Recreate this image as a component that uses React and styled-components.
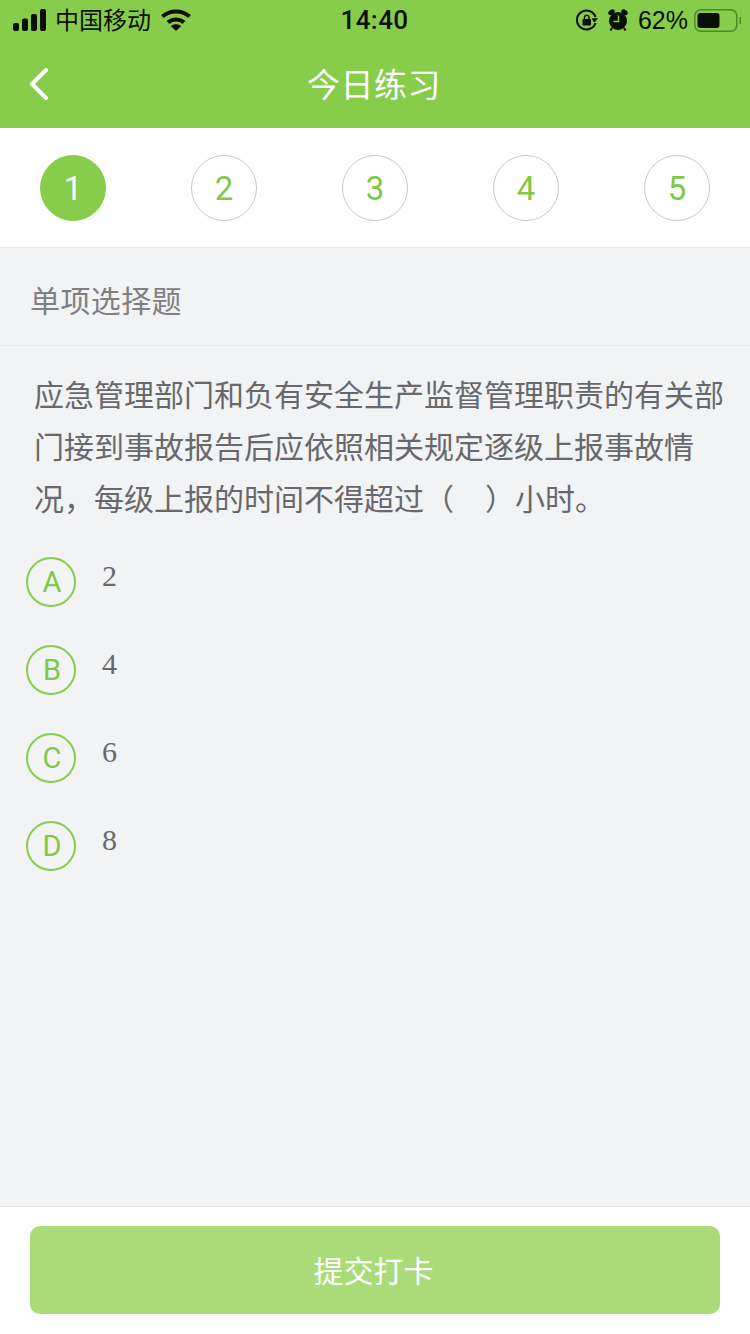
import React from 'react';
import styled, { createGlobalStyle } from 'styled-components';

const GlobalStyle = createGlobalStyle`
  html, body {
    margin: 0;
    padding: 0;
    background: #f2f3f5;
  }
  * {
    box-sizing: border-box;
  }
`;

const Page = styled.div`
  width: 750px;
  height: 1334px;
  display: flex;
  flex-direction: column;
  overflow: hidden;
  background: #f2f3f5;
  font-family: "Liberation Sans", "Noto Sans CJK SC", sans-serif;
`;

const Header = styled.header`
  height: 128px;
  flex: none;
  background: #87cd4b;
`;

const StatusBar = styled.div`
  height: 40px;
  padding: 0 8px 0 13px;
  display: grid;
  grid-template-columns: 1fr auto 1fr;
  align-items: center;
  color: #0a0f05;
`;

const StatusLeft = styled.div`
  display: flex;
  align-items: center;
  font-size: 24px;
`;

const Carrier = styled.span`
  margin: -3px 10px 0 9px;
`;

const StatusRight = styled.div`
  display: flex;
  align-items: center;
  justify-content: flex-end;
  font-size: 25px;
`;

const Clock = styled.div`
  font-family: Roboto, sans-serif;
  font-size: 26px;
  font-weight: 500;
  letter-spacing: 0.4px;
  margin-right: 6px;
`;

const StatusIcon = styled.svg`
  flex: none;
  margin-right: ${p => p.$gap || 0}px;
`;

const NavBar = styled.div`
  height: 88px;
  padding: 0 2px 2px 0;
  position: relative;
  display: flex;
  align-items: center;
  justify-content: center;
`;

const BackIcon = styled.svg`
  position: absolute;
  left: 28px;
  top: 27px;
`;

const Title = styled.h1`
  margin: 0;
  font-size: 33px;
  font-weight: 400;
  color: #fff;
  letter-spacing: 0.5px;
`;

const Steps = styled.div`
  height: 120px;
  flex: none;
  padding: 27px 40px 0;
  display: flex;
  justify-content: space-between;
  align-items: flex-start;
  background: #fff;
  border-bottom: 1px solid #e6e6e6;
`;

const Step = styled.div`
  width: 66px;
  height: 66px;
  border-radius: 50%;
  display: flex;
  align-items: center;
  justify-content: center;
  font-family: Roboto, sans-serif;
  font-size: 33px;
  color: ${p => (p.$active ? '#fff' : '#7fc84a')};
  background: ${p => (p.$active ? '#87cd4b' : '#fff')};
  border: 1px solid ${p => (p.$active ? '#87cd4b' : '#c8c8c8')};
`;

const SectionLabel = styled.div`
  height: 98px;
  flex: none;
  padding: 4px 30px 0;
  display: flex;
  align-items: center;
  font-size: 30px;
  letter-spacing: 0.4px;
  color: #808083;
  border-bottom: 1px solid #e6e7e9;
`;

const Question = styled.p`
  margin: 0;
  padding: 24px 20px 0 34px;
  font-size: 30px;
  line-height: 52px;
  color: #68686c;
`;

const Options = styled.div`
  padding: 31px 0 0 26px;
  display: flex;
  flex-direction: column;
  gap: 38px;
`;

const Option = styled.div`
  display: flex;
  align-items: flex-start;
  gap: 26px;
`;

const OptionBadge = styled.div`
  width: 50px;
  height: 50px;
  flex: none;
  padding-left: 2px;
  border-radius: 50%;
  border: 2px solid #87cd4b;
  display: flex;
  align-items: center;
  justify-content: center;
  font-family: Roboto, sans-serif;
  font-size: 29px;
  color: #7fc84a;
`;

const OptionText = styled.div`
  font-family: "Liberation Serif", serif;
  font-size: 30px;
  line-height: 38px;
  color: #68686c;
`;

const Footer = styled.footer`
  margin-top: auto;
  height: 128px;
  flex: none;
  padding: 19px 30px 0;
  background: #fff;
  border-top: 1px solid #e6e6e6;
`;

const SubmitButton = styled.button`
  display: block;
  width: 690px;
  height: 88px;
  padding: 0 3px 3px 0;
  border: 0;
  border-radius: 10px;
  background: #a9dc78;
  color: #fff;
  font-family: inherit;
  font-size: 30px;
`;

const SignalIcon = () => (
  <StatusIcon width="33" height="22" viewBox="0 0 33 22" fill="#0a0f05">
    <rect x="0" y="14" width="6" height="8" rx="2" />
    <rect x="9" y="9.500" width="6" height="12.500" rx="2" />
    <rect x="18" y="5" width="6" height="17" rx="2" />
    <rect x="27" y="0" width="6" height="22" rx="2" />
  </StatusIcon>
);

const WifiIcon = () => (
  <StatusIcon width="30" height="22" viewBox="0 0 30 22" fill="none" stroke="#0a0f05" strokeWidth="4.200">
    <path d="M1.500 7.500 C9 0.800 21 0.800 28.500 7.500" />
    <path d="M7 13.500 C11.500 9.500 18.500 9.500 23 13.500" />
    <path d="M9.800 17 L15 22 L20.200 17 C17 14.500 13 14.500 9.800 17 Z" fill="#0a0f05" stroke="none" />
  </StatusIcon>
);

const RotationLockIcon = () => (
  <StatusIcon $gap={10} width="22" height="22" viewBox="0 0 22 22" fill="none" stroke="#0a0f05" strokeWidth="2">
    <path d="M19.500 14 A9.500 9.500 0 1 1 19.500 8" />
    <path d="M22 9 L18.500 13.500 L15.500 9.500 Z" fill="#0a0f05" stroke="none" />
    <rect x="6.500" y="10" width="8.500" height="6.500" rx="1" fill="#0a0f05" stroke="none" />
    <path d="M8.500 10 V8 A2.300 2.300 0 0 1 13 8 V10" strokeWidth="1.500" />
  </StatusIcon>
);

const AlarmIcon = () => (
  <StatusIcon $gap={10} width="20" height="22" viewBox="0 0 20 22" fill="#0a0f05">
    <circle cx="10" cy="12" r="9" />
    <ellipse cx="3.500" cy="3.200" rx="3.500" ry="2.400" transform="rotate(-35 3.500 3.200)" />
    <ellipse cx="16.500" cy="3.200" rx="3.500" ry="2.400" transform="rotate(35 16.500 3.200)" />
    <path d="M10.500 6.500 V12.500 H5.500" stroke="#87cd4b" strokeWidth="1.400" fill="none" />
    <path d="M4 19 L2.500 21.500 M16 19 L17.500 21.500" stroke="#0a0f05" strokeWidth="2" />
  </StatusIcon>
);

const BatteryIcon = () => (
  <svg width="48" height="23" viewBox="0 0 48 23" style={{ marginLeft: 6, flex: 'none' }}>
    <rect x="0.800" y="0.800" width="42" height="21.400" rx="6" fill="none" stroke="#4d8a26" strokeWidth="1.500" />
    <rect x="3.500" y="4" width="22" height="15" rx="3" fill="#0a0f05" />
    <rect x="45.500" y="8" width="1.500" height="7" fill="#4d8a26" />
  </svg>
);

const BackArrow = () => (
  <BackIcon width="22" height="34" viewBox="0 0 22 34" fill="none" stroke="#fff" strokeWidth="4" strokeLinecap="round" strokeLinejoin="round">
    <path d="M18 3 L4 17 L18 31" />
  </BackIcon>
);

const steps = [1, 2, 3, 4, 5];
const options = [
  ['A', '2'],
  ['B', '4'],
  ['C', '6'],
  ['D', '8'],
];
const questionText = '应急管理部门和负有安全生产监督管理职责的有关部门接到事故报告后应依照相关规定逐级上报事故情况，每级上报的时间不得超过（\u00A0\u00A0\u00A0\u2009）小时。';

const App = () => {
  return (
    <Page>
      <GlobalStyle />
      <Header>
        <StatusBar>
          <StatusLeft>
            <SignalIcon />
            <Carrier>中国移动</Carrier>
            <WifiIcon />
          </StatusLeft>
          <Clock>14:40</Clock>
          <StatusRight>
            <RotationLockIcon />
            <AlarmIcon />
            <span>62%</span>
            <BatteryIcon />
          </StatusRight>
        </StatusBar>
        <NavBar>
          <BackArrow />
          <Title>今日练习</Title>
        </NavBar>
      </Header>
      <Steps>
        {steps.map(n => (
          <Step key={n} $active={n === 1}>{n}</Step>
        ))}
      </Steps>
      <SectionLabel>单项选择题</SectionLabel>
      <Question>{questionText}</Question>
      <Options>
        {options.map(([key, text]) => (
          <Option key={key}>
            <OptionBadge>{key}</OptionBadge>
            <OptionText>{text}</OptionText>
          </Option>
        ))}
      </Options>
      <Footer>
        <SubmitButton>提交打卡</SubmitButton>
      </Footer>
    </Page>
  );
};

export default App;
